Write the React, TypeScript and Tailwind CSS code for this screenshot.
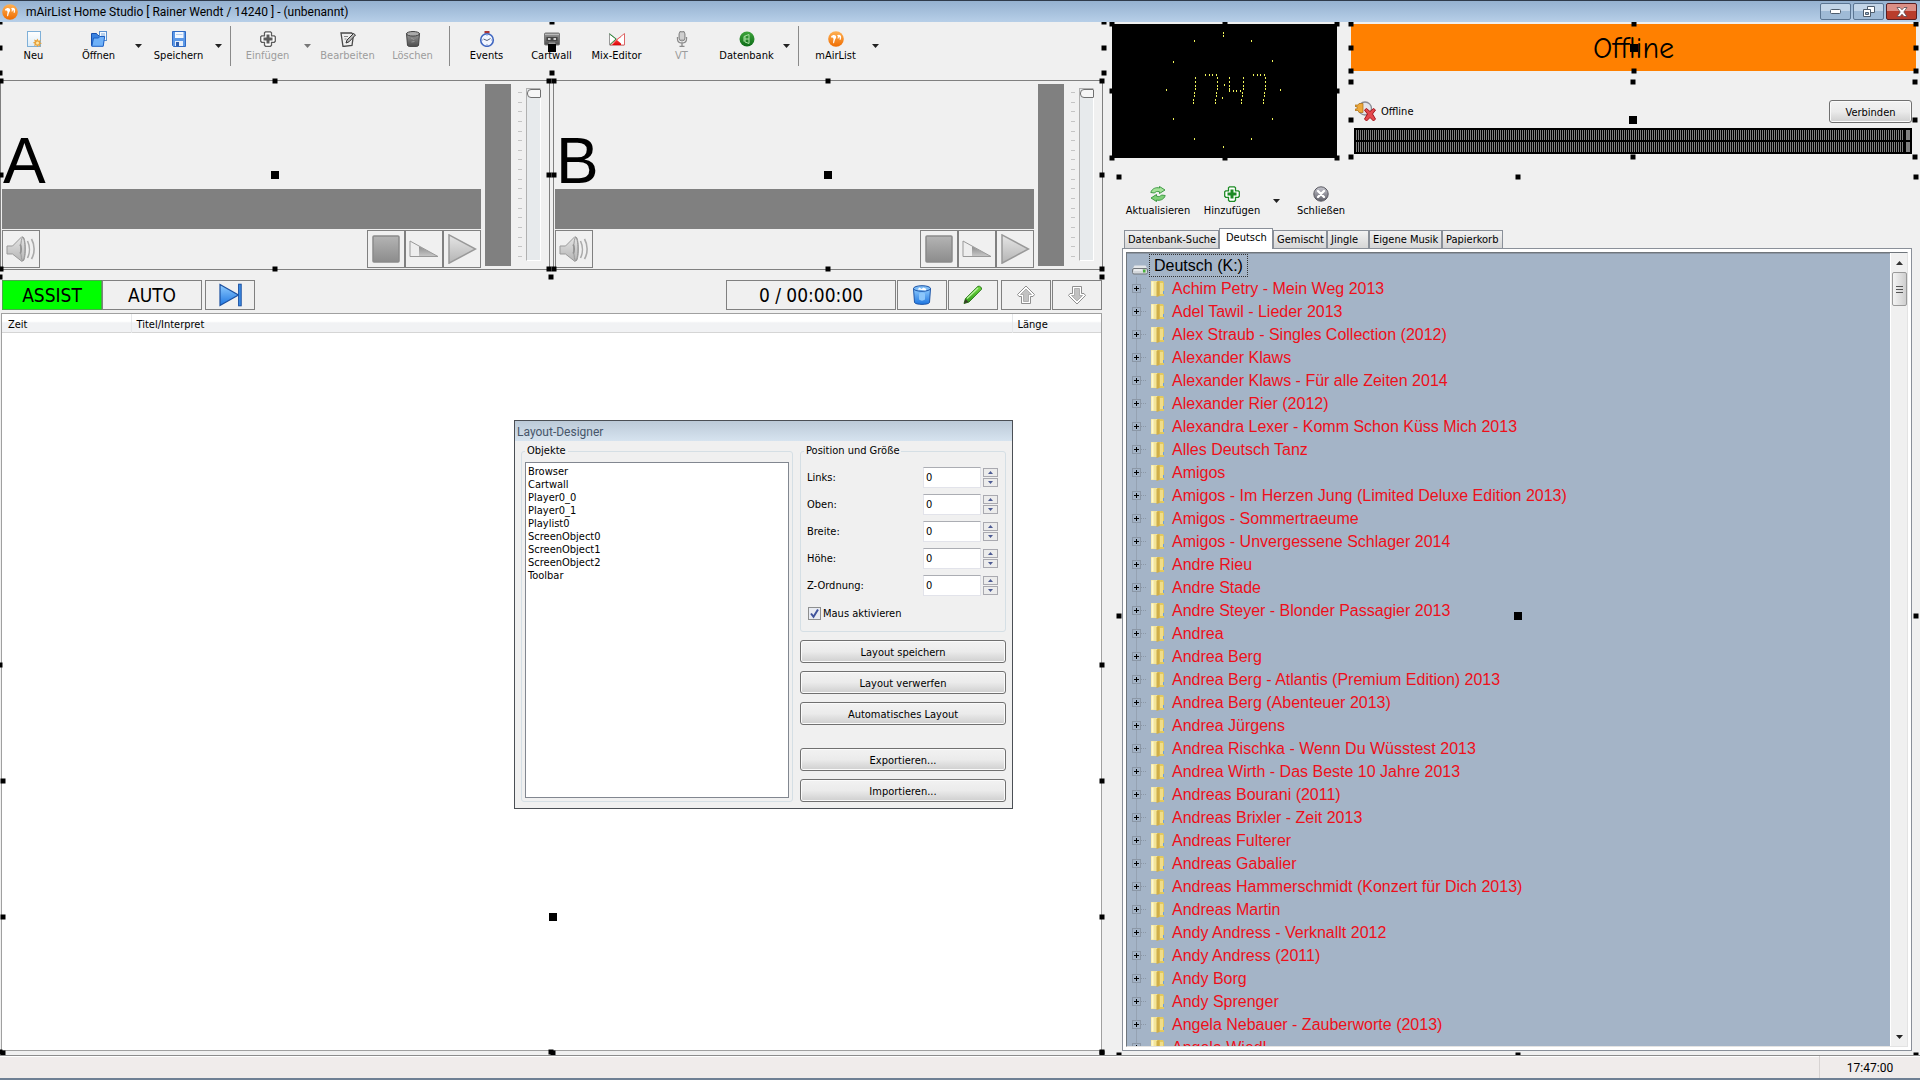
import type { ReactNode } from "react"

const albums = [
  "Achim Petry - Mein Weg 2013",
  "Adel Tawil - Lieder 2013",
  "Alex Straub - Singles Collection (2012)",
  "Alexander Klaws",
  "Alexander Klaws - Für alle Zeiten 2014",
  "Alexander Rier (2012)",
  "Alexandra Lexer - Komm Schon Küss Mich 2013",
  "Alles Deutsch Tanz",
  "Amigos",
  "Amigos - Im Herzen Jung (Limited Deluxe Edition 2013)",
  "Amigos - Sommertraeume",
  "Amigos - Unvergessene Schlager 2014",
  "Andre Rieu",
  "Andre Stade",
  "Andre Steyer - Blonder Passagier 2013",
  "Andrea",
  "Andrea Berg",
  "Andrea Berg - Atlantis (Premium Edition) 2013",
  "Andrea Berg (Abenteuer 2013)",
  "Andrea Jürgens",
  "Andrea Rischka - Wenn Du Wüsstest 2013",
  "Andrea Wirth - Das Beste 10 Jahre 2013",
  "Andreas Bourani (2011)",
  "Andreas Brixler - Zeit 2013",
  "Andreas Fulterer",
  "Andreas Gabalier",
  "Andreas Hammerschmidt (Konzert für Dich 2013)",
  "Andreas Martin",
  "Andy Andress - Verknallt 2012",
  "Andy Andress (2011)",
  "Andy Borg",
  "Andy Sprenger",
  "Angela Nebauer - Zauberworte (2013)",
  "Angela Wiedl",
]

const objects = [
  "Browser",
  "Cartwall",
  "Player0_0",
  "Player0_1",
  "Playlist0",
  "ScreenObject0",
  "ScreenObject1",
  "ScreenObject2",
  "Toolbar",
]

/* ---------- design mode handles ---------- */

function Handles({ center = true }: { center?: boolean }) {
  return (
    <div className="pointer-events-none absolute inset-0 z-10" aria-hidden="true">
      <i className="absolute top-0 left-0 size-[5px] -translate-1/2 bg-black" />
      <i className="absolute top-0 left-1/2 size-[5px] -translate-1/2 bg-black" />
      <i className="absolute top-0 left-full size-[5px] -translate-1/2 bg-black" />
      <i className="absolute top-1/2 left-0 size-[5px] -translate-1/2 bg-black" />
      <i className="absolute top-1/2 left-full size-[5px] -translate-1/2 bg-black" />
      <i className="absolute top-full left-0 size-[5px] -translate-1/2 bg-black" />
      <i className="absolute top-full left-1/2 size-[5px] -translate-1/2 bg-black" />
      <i className="absolute top-full left-full size-[5px] -translate-1/2 bg-black" />
      {center && <i className="absolute top-1/2 left-1/2 size-2 -translate-1/2 bg-black" />}
    </div>
  )
}

/* ---------- icons ---------- */

function Svg({ children, size = 16 }: { children: ReactNode; size?: number }) {
  return (
    <svg width={size} height={size} viewBox={`0 0 ${size} ${size}`} aria-hidden="true">
      {children}
    </svg>
  )
}

function LogoIcon() {
  return (
    <Svg>
      <circle cx="8" cy="8" r="7.8" fill="url(#orange)" />
      <path d="M3 5.500c1.500-1.800 3.500-2 4.800-.8.8 1.300.2 2.600-.6 3.500-.6 1-.7 2.300-1 3.600l-1 .8c-.3-1.600.2-3 .4-4.500l-.8-1.500-1.300.2zM9 4.500c1.200-1 2.800-1 3.800.2.6 1.500.4 3-.4 4.200l-.8-.2.2-2.500-1 .2-.5 1.300-.9-.5.6-1.500z" fill="#fff" />
    </Svg>
  )
}

function NewIcon() {
  return (
    <Svg>
      <rect x="1.500" y=".5" width="13" height="15" fill="url(#paper)" stroke="#7fb0d8" />
      <path d="M11.500 7.500l1 2.200 2.400-.7-1 2.200 2.100 1-2.200 1 .9 2.200-2.300-.8-1 1.500-1.200-1.800-2.200.6.800-2.200-2-1 2-1-.7-2.200 2.300.7z" fill="#e8a33d" />
      <circle cx="11.500" cy="12" r="1.500" fill="#ffe9a8" />
    </Svg>
  )
}

function OpenIcon() {
  return (
    <Svg>
      <path d="M.5 2.500h5l1.500 2h5v10H.5z" fill="#3b83e0" stroke="#174fae" />
      <rect x="8.500" y=".5" width="7" height="9" fill="#f4faff" stroke="#5b91cf" />
      <path d="M10 3h4M10 5h4" stroke="#7ea9d8" />
      <path d="M.8 15.300L2.500 7h5l1.200-1.500h5l-1.500 9.800z" fill="#6fb1f8" stroke="#1c5fc4" />
    </Svg>
  )
}

function SaveIcon() {
  return (
    <Svg>
      <path d="M1.500.5h13v15h-12l-1-1z" fill="#5c98e6" stroke="#2f6ac4" />
      <rect x="4" y="1" width="8.500" height="6" fill="#f3f8ff" />
      <path d="M5 3.500h6.500" stroke="#b9d0ee" />
      <rect x="4" y="10" width="8" height="5" fill="#e6effb" />
      <rect x="5" y="11" width="3" height="4" fill="#2f5fae" />
    </Svg>
  )
}

function PlusIcon({ color }: { color: string }) {
  return (
    <Svg>
      <path d="M5.500.8h5l1 1v3h2.800l1 1v4.500l-1 1h-2.800v3l-1 1h-5l-1-1v-3H1.700l-1-1V5.800l1-1h2.800v-3z" fill="#fff" stroke={color} strokeWidth="1.300" />
      <path d="M6.500 3.500h3v3h3v3h-3v3h-3v-3h-3v-3h3z" fill={color} />
    </Svg>
  )
}

function EditIcon() {
  return (
    <Svg>
      <path d="M1 2h10.500l2 1.500-1.500 11-9 1z" fill="#efefef" stroke="#4a4a4a" strokeWidth="1.300" />
      <path d="M4 5.500h4M4.500 8h2" stroke="#888" />
      <path d="M6 12l1-3 6.500-6.500 2 1.500L9 10.800z" fill="#bbb" stroke="#333" />
    </Svg>
  )
}

function DeleteIcon() {
  return (
    <Svg>
      <path d="M1.500 2.500l1 12 2 1.200h7l2-1.200 1-12z" fill="url(#can)" stroke="#444" />
      <ellipse cx="8" cy="2.800" rx="6.500" ry="2.300" fill="#aaa" stroke="#444" />
      <path d="M6 7l3 1.500 1-1M6.500 11l3-.5" stroke="#999" fill="none" />
    </Svg>
  )
}

function EventsIcon() {
  return (
    <Svg>
      <rect x="5.500" y="0" width="5" height="2.500" fill="#a33" />
      <circle cx="8" cy="9" r="6.300" fill="#f2f6ff" stroke="#3f66c0" strokeWidth="1.600" />
      <path d="M4.500 8L8 9.500l3.500-2" fill="none" stroke="#55607a" />
      <path d="M8 4v1M8 13v1M3 9h1M12 9h1" stroke="#8fa3cf" />
    </Svg>
  )
}

function CartIcon() {
  return (
    <Svg>
      <rect x=".5" y="2" width="15" height="12" rx="1" fill="url(#can)" stroke="#777" />
      <path d="M1 3.500h14" stroke="#bbb" />
      <rect x="2.500" y="6" width="11" height="4" fill="#444" />
      <path d="M4 8h2.500M9.500 8H12" stroke="#fff" strokeWidth="1.500" />
      <path d="M4 14l1-2.500h6l1 2.500" fill="#999" />
    </Svg>
  )
}

function MixIcon() {
  return (
    <Svg>
      <path d="M.5 14V2.500L15 14z" fill="#fff" stroke="#999" />
      <path d="M15.500 14V2.500L1 14z" fill="#fff" stroke="#d66" />
      <path d="M2 14l6-5 4 3.500V6l-4 3zM8 8.500l4-3V14H3z" fill="url(#mix)" />
      <path d="M.5 3l6.500 5L1 13.500" fill="none" stroke="#2a8f3a" />
    </Svg>
  )
}

function MicIcon() {
  return (
    <Svg>
      <rect x="5" y="0" width="6" height="10" rx="3" fill="#b5b5b5" stroke="#8a8a8a" />
      <path d="M6 3h4M6 5h4M6 7h4" stroke="#e8e8e8" />
      <path d="M3.500 6v2c0 3 2 4 4.500 4s4.500-1 4.500-4V6M8 12v3M5.500 15.300h5" fill="none" stroke="#8a8a8a" strokeWidth="1.300" />
    </Svg>
  )
}

function DatabaseIcon() {
  return (
    <Svg>
      <circle cx="8" cy="8" r="7.500" fill="url(#green)" />
      <path d="M6 5l4-1.500v9L6 11zM6 8h4M6 5l-1 .5v5" fill="none" stroke="#a9e0a3" />
    </Svg>
  )
}

function RefreshIcon() {
  return (
    <Svg>
      <path d="M.8 6.500C2 2.500 6 1 9.500 2V.5l5.500 3.500-5.500 3.500V5.800C7 5 5.500 5.500 4.500 7z" fill="#a5e29a" stroke="#3f9a45" />
      <path d="M15.200 9.500C14 13.500 10 15 6.500 14v1.500L1 12l5.500-3.500v1.700c2.500.8 4 .3 5-1.200z" fill="#7fcf78" stroke="#3f9a45" />
    </Svg>
  )
}

function CloseIcon() {
  return (
    <Svg>
      <circle cx="8" cy="8" r="7.200" fill="url(#steel)" stroke="#5a5a62" />
      <path d="M5 5l6 6M11 5l-6 6" stroke="#fff" strokeWidth="2.400" strokeLinecap="round" />
    </Svg>
  )
}

function OfflineIcon() {
  return (
    <svg width="22" height="21" viewBox="0 0 22 21" aria-hidden="true">
      <circle cx="10" cy="7.500" r="6.500" fill="#e4e4ea" stroke="#8a8a92" strokeWidth="1.300" />
      <path d="M0 4h3l1-1.500h4v9H4l-1-2H0v-1.500h2V5.500H0z" fill="#eda83a" stroke="#a96f16" strokeWidth=".7" />
      <path d="M9.500 9l2-1.500 3.500 3 3.500-3 2 1.500-3 4 3 5-2 2-3.500-3.500-3.500 3.500-2-2 3-5z" fill="#e5484d" stroke="#a3141a" />
    </svg>
  )
}

function SpeakerIcon() {
  return (
    <svg width="30" height="28" viewBox="0 0 30 28" aria-hidden="true">
      <path d="M1 11h5.500L16 1.500c2 1 3 6 3 12.500s-1 11.500-3 12.500L6.500 19H1z" fill="url(#silver)" stroke="#999" />
      <path d="M14 9.500c1.500 1.500 1.500 7.500 0 9" fill="none" stroke="#888" strokeWidth="1.600" />
      <ellipse cx="17" cy="14" rx="2.300" ry="12" fill="none" stroke="#9a9a9a" />
      <path d="M21.500 6c2.500 5 2.500 12 0 17M25.500 4c3.500 6 3.500 14 0 20" fill="none" stroke="#aaa" strokeWidth="1.600" />
    </svg>
  )
}

function StopIcon() {
  return (
    <Svg size={28}>
      <rect x="1" y="1" width="26" height="26" rx="1" fill="url(#stop)" stroke="#8a8a8a" strokeWidth="1.500" />
    </Svg>
  )
}

function FadeIcon() {
  return (
    <Svg size={30}>
      <path d="M1 7l9 5.200V22.500H1z" fill="#eee" />
      <path d="M10 12.200L29 22.500H10z" fill="url(#fade)" />
      <path d="M1 7v15.500h28z" fill="none" stroke="#999" />
    </Svg>
  )
}

function PlayIcon() {
  return (
    <Svg size={30}>
      <path d="M2 .8L28.500 15 2 29.200z" fill="url(#silver)" stroke="#999" strokeWidth="1.500" />
    </Svg>
  )
}

function NextIcon() {
  return (
    <svg width="24" height="24" viewBox="0 0 24 24" aria-hidden="true">
      <path d="M2 1.500L20.500 12 2 22.500z" fill="url(#blue)" stroke="#1a4fa0" strokeWidth="1.200" />
      <rect x="20.600" y="1.200" width="2.600" height="21.600" fill="#3f8fe8" stroke="#1a4fa0" />
    </svg>
  )
}

function BinIcon() {
  return (
    <Svg size={20}>
      <path d="M1.500 3.500l1 14c1 2.500 14 2.500 15 0l1-14z" fill="url(#blue)" stroke="#1f56a8" />
      <ellipse cx="10" cy="3.500" rx="8.500" ry="2.800" fill="#7fbcf5" stroke="#1f56a8" />
      <path d="M5.500 4.500l2-2 2 1.500 2-1.500 3 1.500-1 1.500z" fill="#fff" />
      <path d="M7 8.500c2-1.500 4-1.500 6 0v6c-2 1.500-4 1.500-6 0z" fill="#8cc6fa" />
    </Svg>
  )
}

function PencilIcon() {
  return (
    <Svg size={20}>
      <path d="M1 18.500l1.500-5L15 1.300c2-.6 3.800 1.200 3.500 3L6 17z" fill="url(#pencil)" stroke="#2c7a1c" />
      <path d="M1 18.500l1.500-4.500L5.500 17z" fill="#3a3a2a" />
      <path d="M4 13.500L15 3" stroke="#b9f0a0" strokeWidth="1.400" />
    </Svg>
  )
}

function ArrowIcon({ down = false }: { down?: boolean }) {
  return (
    <svg width="20" height="20" viewBox="0 0 20 20" className={down ? "rotate-180" : ""} aria-hidden="true">
      <path d="M10 1l8.500 8.500-1.500 2h-2.500v7h-9v-7H3l-1.500-2z" fill="#fff" stroke="#8f8f8f" />
      <path d="M10 4l5.500 5.500h-3v7h-5v-7h-3z" fill="#c2c2c2" stroke="#a2a2a2" strokeWidth=".8" />
    </svg>
  )
}

function FolderIcon() {
  return (
    <svg width="14" height="17" viewBox="0 0 14 17" aria-hidden="true">
      <rect x="0" y="1" width="7" height="15" fill="#f3e59a" />
      <path d="M6 1h6l1 2v13H6z" fill="#e3c95f" />
      <path d="M5.500 2l3-1v15l-3 1z" fill="#cfae48" />
      <path d="M1.500 1.500v14" stroke="#fdf7cf" strokeWidth="2" />
      <rect x="9" y="3" width="3" height="11" fill="#f0dd8a" />
      <path d="M12.500 11v3" stroke="#6f9fd8" />
    </svg>
  )
}

function DriveIcon() {
  return (
    <svg width="16" height="10" viewBox="0 0 16 10" aria-hidden="true">
      <path d="M2.500.5h11L15.500 4H.5z" fill="#e3e6e9" />
      <rect x=".5" y="3.500" width="15" height="5.500" rx="1.500" fill="#d4d8dc" stroke="#71777d" />
      <path d="M2 5h8" stroke="#fff" />
      <rect x="11" y="4.500" width="2.500" height="3" fill="#4bb03c" />
    </svg>
  )
}

function Caret({ dim = false }: { dim?: boolean }) {
  return (
    <svg width="7" height="4" viewBox="0 0 7 4" aria-hidden="true">
      <path d="M0 0h7L3.500 4z" fill={dim ? "#777" : "#222"} />
    </svg>
  )
}

/* Gradients shared by the icons above */
function Gradients() {
  const stops: [string, string, string][] = [
    ["orange", "#ffb255", "#ef6c00"],
    ["paper", "#ffffff", "#dcecf8"],
    ["can", "#9a9a9a", "#4c4c4c"],
    ["green", "#3fa53c", "#0c6b17"],
    ["steel", "#c8c8d0", "#5f5f68"],
    ["silver", "#e6e6e6", "#b4b4b4"],
    ["stop", "#b4b4b4", "#8c8c8c"],
    ["fade", "#8c8c8c", "#c8c8c8"],
    ["blue", "#8fccff", "#1f76e0"],
    ["pencil", "#6fdc3c", "#2f9a1c"],
    ["mix", "#ff6a6a", "#e00000"],
  ]
  return (
    <svg width="0" height="0" className="absolute" aria-hidden="true">
      <defs>
        {stops.map(([id, from, to]) => (
          <linearGradient key={id} id={id} x1="0" y1="0" x2="0" y2="1">
            <stop offset="0" stopColor={from} />
            <stop offset="1" stopColor={to} />
          </linearGradient>
        ))}
      </defs>
    </svg>
  )
}

/* ---------- title bar ---------- */

function TitleBar() {
  return (
    <header className="flex h-[22px] shrink-0 items-center border-t border-[#2f3a4a] bg-linear-to-b from-[#95b1d0] to-[#b7cfe8] pr-[3px] pl-[2px]">
      <LogoIcon />
      <h1 className="ml-2 flex-1 font-[Roboto,'Noto_Sans',sans-serif] text-[12px] leading-4 text-black">
        mAirList Home Studio [ Rainer Wendt / 14240 ] - (unbenannt)
      </h1>
      <div className="flex gap-[2px]">
        <button aria-label="Minimieren" className="flex h-[17px] w-[31px] items-center justify-center rounded-[2px] border border-[#5b7592] bg-linear-to-b from-[#c3d5e8] from-50% to-[#9fbad6] to-50%">
          <svg width="11" height="5" viewBox="0 0 11 5"><rect x=".5" y=".5" width="10" height="4" rx="1" fill="#fff" stroke="#4f5d6d" /></svg>
        </button>
        <button aria-label="Wiederherstellen" className="flex h-[17px] w-[31px] items-center justify-center rounded-[2px] border border-[#5b7592] bg-linear-to-b from-[#c3d5e8] from-50% to-[#9fbad6] to-50%">
          <svg width="12" height="11" viewBox="0 0 12 11">
            <path d="M4.500.5h7v6h-7z" fill="#fff" stroke="#4f5d6d" />
            <path d="M.5 3.500h7v7h-7z" fill="#fff" stroke="#4f5d6d" />
            <path d="M2.500 6.500h3v2h-3z" fill="#9fbad6" stroke="#4f5d6d" />
          </svg>
        </button>
        <button aria-label="Schließen" className="flex h-[17px] w-[31px] items-center justify-center rounded-[2px] border border-[#5a1f22] bg-linear-to-b from-[#dc8f86] from-50% to-[#b93d2c] to-50%">
          <svg width="12" height="10" viewBox="0 0 12 10">
            <path d="M1 .5h3l2 2.300L8 .5h3L7.800 5 11 9.500H8L6 7.200 4 9.500H1L4.200 5z" fill="#fff" stroke="#5d4a50" strokeWidth=".8" />
          </svg>
        </button>
      </div>
    </header>
  )
}

/* ---------- toolbars ---------- */

function ToolButton({ icon, label, wide = false, disabled = false }: { icon: ReactNode; label: string; wide?: boolean; disabled?: boolean }) {
  return (
    <button
      disabled={disabled}
      className={`flex shrink-0 flex-col items-center gap-px whitespace-nowrap disabled:text-[#9c9c9c] ${wide ? "w-[74px]" : "w-[65px]"}`}
    >
      {icon}
      <span className="leading-4">{label}</span>
    </button>
  )
}

function DropButton({ label, dim = false }: { label: string; dim?: boolean }) {
  return (
    <button aria-label={label} className="flex h-[30px] w-[15px] shrink-0 items-center justify-center">
      <Caret dim={dim} />
    </button>
  )
}

function Separator() {
  return (
    <div className="-mt-[5px] flex w-[9px] shrink-0 justify-center">
      <div className="h-10 w-px bg-[#8a8a8a]" />
    </div>
  )
}

function Toolbar() {
  return (
    <div role="toolbar" className="relative flex h-[51px] shrink-0 items-start pt-[9px] pl-px">
      <ToolButton icon={<NewIcon />} label="Neu" />
      <ToolButton icon={<OpenIcon />} label="Öffnen" />
      <DropButton label="Öffnen Menü" />
      <ToolButton icon={<SaveIcon />} label="Speichern" />
      <DropButton label="Speichern Menü" />
      <Separator />
      <ToolButton icon={<PlusIcon color="#5c5c5c" />} label="Einfügen" disabled />
      <DropButton label="Einfügen Menü" dim />
      <ToolButton icon={<EditIcon />} label="Bearbeiten" disabled />
      <ToolButton icon={<DeleteIcon />} label="Löschen" disabled />
      <Separator />
      <ToolButton icon={<EventsIcon />} label="Events" />
      <ToolButton icon={<CartIcon />} label="Cartwall" />
      <ToolButton icon={<MixIcon />} label="Mix-Editor" />
      <ToolButton icon={<MicIcon />} label="VT" disabled />
      <ToolButton icon={<DatabaseIcon />} label="Datenbank" />
      <DropButton label="Datenbank Menü" />
      <Separator />
      <ToolButton icon={<LogoIcon />} label="mAirList" />
      <DropButton label="mAirList Menü" />
      <Handles />
    </div>
  )
}

/* ---------- players ---------- */

function PlayerButton({ label, children }: { label: string; children: ReactNode }) {
  return (
    <button aria-label={label} className="flex size-[38px] items-center justify-center border border-[#808080]">
      {children}
    </button>
  )
}

function Player({ name }: { name: string }) {
  return (
    <section className="relative flex h-[190px] min-w-0 border border-[#808080] pl-px">
      <div className="flex min-w-0 flex-1 flex-col pb-px">
        <div className="flex flex-1 items-end pl-px">
          <h2 className="font-['Liberation_Sans',Arial,sans-serif] text-[64px] leading-[56px]">{name}</h2>
        </div>
        <div className="h-10 bg-[#808080]" />
        <div className="mt-px flex justify-between">
          <PlayerButton label="Vorhören"><SpeakerIcon /></PlayerButton>
          <div className="flex">
            <PlayerButton label="Stopp"><StopIcon /></PlayerButton>
            <PlayerButton label="Ausblenden"><FadeIcon /></PlayerButton>
            <PlayerButton label="Start"><PlayIcon /></PlayerButton>
          </div>
        </div>
      </div>
      <div className="mt-[3px] mb-[3px] ml-1 w-[26px] bg-[#808080]" />
      <div className="flex gap-1 pt-[7px] pr-2 pb-[8px] pl-[7px]">
        <div className="flex flex-col justify-between py-1">
          {Array.from({ length: 18 }, (_, i) => (
            <div key={i} className="h-px w-1 bg-[#c4c4c4]" />
          ))}
        </div>
        <input
          type="range"
          aria-label={`Lautstärke ${name}`}
          defaultValue={0}
          className="h-full w-[15px] appearance-none border border-[#b0b0b0] border-r-white border-b-white bg-[#e7eaec] [writing-mode:vertical-lr] [&::-webkit-slider-thumb]:h-[9px] [&::-webkit-slider-thumb]:w-[14px] [&::-webkit-slider-thumb]:appearance-none [&::-webkit-slider-thumb]:rounded-l-[4px] [&::-webkit-slider-thumb]:rounded-r-[1px] [&::-webkit-slider-thumb]:border [&::-webkit-slider-thumb]:border-[#707070] [&::-webkit-slider-thumb]:bg-[#f6f6f6]"
        />
      </div>
      <Handles />
    </section>
  )
}

/* ---------- playlist ---------- */

function ListButton({ label, children }: { label: string; children: ReactNode }) {
  return (
    <button aria-label={label} className="flex w-[50px] items-center justify-center border border-[#808080]">
      {children}
    </button>
  )
}

function Playlist() {
  return (
    <section className="relative mt-[7px] mr-[2px] mb-[3px] flex min-h-0 flex-1 flex-col pt-[3px]">
      <div className="ml-[2px] flex h-[30px] shrink-0 justify-between text-[19px]">
        <div className="flex">
          <button className="w-[100px] border border-[#4aa84a] bg-[#00ff00]">ASSIST</button>
          <button className="w-[100px] border border-[#808080]">AUTO</button>
          <div className="ml-[3px] flex">
            <ListButton label="Nächster Titel"><NextIcon /></ListButton>
          </div>
        </div>
        <div className="flex gap-px">
          <output className="flex w-[170px] items-center justify-center border border-[#808080]">0 / 00:00:00</output>
          <ListButton label="Papierkorb leeren"><BinIcon /></ListButton>
          <ListButton label="Bearbeiten"><PencilIcon /></ListButton>
          <div className="ml-[2px] flex gap-px">
            <ListButton label="Nach oben"><ArrowIcon /></ListButton>
            <ListButton label="Nach unten"><ArrowIcon down /></ListButton>
          </div>
        </div>
      </div>
      <div className="mt-[3px] mb-px ml-px flex-1 border border-[#a0a0a0] bg-white">
        <table className="w-full table-fixed border-collapse">
          <thead className="border-b border-[#d5d5d5] bg-linear-to-b from-white from-40% to-[#f1f2f4] to-50%">
            <tr className="text-left">
              <th className="w-[129px] border-r border-[#e6e8ea] pt-1 pl-[6px] font-normal">Zeit</th>
              <th className="border-r border-[#e6e8ea] pt-1 pl-[5px] font-normal">Titel/Interpret</th>
              <th className="w-[89px] pt-1 pl-[5px] font-normal">Länge</th>
            </tr>
          </thead>
          <tbody />
        </table>
      </div>
      <Handles />
    </section>
  )
}

/* ---------- clock and encoder ---------- */

// Each entry is one LED of the studio clock
const hourDots = [
  [111, 8], [111, 11], [139, 16], [160, 36], [168, 65], [160, 94], [139, 114],
  [111, 122], [82, 114], [61, 94], [54, 65], [61, 37], [82, 16],
]
const column = (x: number) => [
  [x, 53], [x, 57], [x, 61], [x, 64], [x - 1, 68], [x - 1, 71], [x - 2, 75], [x - 2, 78],
]
const bar = (x: number, y: number) => [[x, y], [x + 4, y], [x + 7, y], [x + 11, y]]
const digitDots = [
  ...column(83),
  ...bar(93, 50), ...column(105),
  [112, 60], [110, 73],
  ...column(117).slice(0, 4), ...bar(117, 66), ...column(131),
  ...bar(141, 50), ...column(153),
]

function Clock() {
  return (
    <section className="relative h-[134px] w-[225px] shrink-0 bg-black">
      <svg width="225" height="134" viewBox="0 0 225 134" role="img" aria-label="17:47" shapeRendering="crispEdges">
        {[...hourDots, ...digitDots].map(([x, y], i) => (
          <rect key={i} x={x} y={y} width="1" height="2" fill="#eef25a" />
        ))}
      </svg>
      <Handles center={false} />
    </section>
  )
}

function MeterRow() {
  return (
    <div className="flex h-[10px] gap-[3px]">
      <div className="flex-1 bg-[repeating-linear-gradient(90deg,#808080_0px,#808080_1px,#000_1px,#000_2px)]" />
      <div className="w-1 bg-[#808080]" />
    </div>
  )
}

function Encoder() {
  return (
    <section className="relative mt-[11px] mr-px flex h-[75px] flex-col pr-[3px] pl-[3px]">
      <div className="mt-[18px] flex h-[23px] items-center pl-px">
        <OfflineIcon />
        <span className="ml-1 flex-1">Offline</span>
        <WinButton className="h-[23px] w-[83px]">Verbinden</WinButton>
      </div>
      <div className="mt-[5px] flex h-[26px] flex-col gap-[2px] bg-black p-[2px]">
        <MeterRow />
        <MeterRow />
      </div>
      <Handles />
    </section>
  )
}

function WinButton({ children, className = "" }: { children: ReactNode; className?: string }) {
  return (
    <button className={`rounded-[3px] border border-[#707070] bg-linear-to-b from-[#f2f2f2] via-[#ebebeb] via-50% to-[#cfcfcf] pt-[2px] shadow-[inset_0_0_0_1px_#fafafa] ${className}`}>
      {children}
    </button>
  )
}

/* ---------- browser ---------- */

function Tab({ children, width, active = false }: { children: ReactNode; width: string; active?: boolean }) {
  return (
    <button
      role="tab"
      aria-selected={active}
      className={`${width} border border-b-0 border-[#8a9099] text-left whitespace-nowrap ${
        active
          ? "z-[1] -mb-px h-[21px] bg-white pb-[2px] pl-[6px]"
          : "h-[18px] bg-linear-to-b from-[#f2f2f2] to-[#d6d6d6] pt-px pl-[3px]"
      }`}
    >
      {children}
    </button>
  )
}

function Browser() {
  return (
    <section className="relative mt-[19px] mr-1 ml-[15px] flex min-h-0 flex-1 flex-col pr-1 pb-1 pl-[3px]">
      <div role="toolbar" className="flex h-11 items-start pt-[9px]">
        <div className="-ml-px flex">
          <ToolButton icon={<RefreshIcon />} label="Aktualisieren" wide />
          <ToolButton icon={<PlusIcon color="#1c8a24" />} label="Hinzufügen" wide />
          <DropButton label="Hinzufügen Menü" />
          <ToolButton icon={<CloseIcon />} label="Schließen" wide />
        </div>
      </div>
      <div role="tablist" className="mt-[7px] flex items-end pl-[2px]">
        <Tab width="w-[95px]">Datenbank-Suche</Tab>
        <Tab width="w-[54px]" active>Deutsch</Tab>
        <Tab width="w-[54px]">Gemischt</Tab>
        <Tab width="w-[42px]">Jingle</Tab>
        <Tab width="w-[73px]">Eigene Musik</Tab>
        <Tab width="w-[61px]">Papierkorb</Tab>
      </div>
      <div className="flex min-h-0 flex-1 border border-[#8a9099] bg-white p-[3px]">
        <div className="flex min-h-0 flex-1 border border-t-[#70767c] border-r-[#e3e3e3] border-b-[#e3e3e3] border-l-[#70767c] bg-[#a4b4c7]">
          <ul role="tree" className="min-h-0 flex-1 overflow-hidden border-t border-[#8c97a5] pl-1 font-['Liberation_Sans',Arial,sans-serif] text-[16px]">
            <li role="treeitem" className="flex h-[23px] items-center">
              <span className="ml-px mt-2"><DriveIcon /></span>
              <span className="ml-px border border-dotted border-[#333] px-1 leading-[21px] text-black">Deutsch (K:)</span>
            </li>
            {albums.map((album) => (
              <li key={album} role="treeitem" className="flex h-[23px] items-center whitespace-nowrap text-[#ee0f1a]">
                <div className="flex h-full w-5 items-center bg-[linear-gradient(90deg,transparent_5px,#95a2b2_5px,#95a2b2_6px,transparent_6px)]">
                  <button aria-label={`${album} öffnen`} className="ml-px flex size-[9px] items-center justify-center border border-[#8b97a6] bg-[#a4b4c7]">
                    <svg width="5" height="5" viewBox="0 0 5 5"><path d="M0 2.500h5M2.500 0v5" stroke="#000" /></svg>
                  </button>
                  <span className="w-[5px] border-t border-dotted border-[#8b97a6]" />
                </div>
                <FolderIcon />
                <span className="ml-[7px]">{album}</span>
              </li>
            ))}
          </ul>
          <div className="flex w-[17px] flex-col items-center border-l border-white bg-[#f0f0f0]">
            <button aria-label="Nach oben blättern" className="flex h-[19px] w-full items-center justify-center">
              <svg width="7" height="4" viewBox="0 0 7 4"><path d="M0 4h7L3.500 0z" fill="#333" /></svg>
            </button>
            <div className="flex h-[34px] w-[15px] flex-col items-center justify-center gap-[2px] rounded-[2px] border border-[#9a9a9a] bg-linear-to-r from-[#f4f4f4] to-[#cfcfcf]">
              <i className="h-px w-[7px] bg-[#555]" />
              <i className="h-px w-[7px] bg-[#555]" />
              <i className="h-px w-[7px] bg-[#555]" />
            </div>
            <button aria-label="Nach unten blättern" className="mt-auto flex h-[19px] w-full items-center justify-center">
              <Caret />
            </button>
          </div>
        </div>
      </div>
      <Handles />
    </section>
  )
}

/* ---------- layout designer ---------- */

function SpinRow({ id, label }: { id: string; label: string }) {
  return (
    <div className="flex h-[21px] items-center">
      <label htmlFor={id} className="flex-1">{label}</label>
      <input id={id} defaultValue="0" className="h-[21px] w-[58px] border border-[#e2e3ea] border-t-[#abadb3] bg-white pl-[2px]" />
      <div className="ml-[2px] flex w-[15px] flex-col gap-px">
        <button aria-label={`${label} erhöhen`} className="flex h-[9px] items-center justify-center border border-[#a9a9b0] bg-[#ececec]">
          <svg width="5" height="3" viewBox="0 0 5 3"><path d="M0 3h5L2.500 0z" fill="#4d5b94" /></svg>
        </button>
        <button aria-label={`${label} verringern`} className="flex h-[9px] items-center justify-center border border-[#a9a9b0] bg-[#ececec]">
          <svg width="5" height="3" viewBox="0 0 5 3"><path d="M0 0h5L2.500 3z" fill="#4d5b94" /></svg>
        </button>
      </div>
    </div>
  )
}

function LayoutDesigner() {
  return (
    <div role="dialog" aria-labelledby="designer-title" className="absolute top-[420px] left-[514px] z-20 w-[499px] border border-[#4b4f55] bg-[#f0f0f0] pb-[6px]">
      <h2 id="designer-title" className="flex h-5 items-center bg-linear-to-b from-[#bccad8] to-[#d6e3ef] pt-px pl-[2px] font-[Roboto,'Noto_Sans',sans-serif] text-[12px] text-[#47566a]">
        Layout-Designer
      </h2>
      <div className="flex gap-[7px] px-[6px] pt-[3px]">
        <fieldset className="flex w-[272px] flex-col rounded-[3px] border border-[#d5dfe5] px-[3px] pb-[3px]">
          <legend className="px-[2px] leading-[14px]">Objekte</legend>
          <select size={9} aria-label="Objekte" className="mt-1 flex-1 appearance-none overflow-hidden border border-[#828790] bg-white py-[2px]">
            {objects.map((name) => (
              <option key={name} className="h-[13px] min-h-0 p-0 pl-[2px] leading-[13px]">{name}</option>
            ))}
          </select>
        </fieldset>
        <div className="flex flex-1 flex-col">
          <fieldset className="rounded-[3px] border border-[#d5dfe5] pr-[7px] pb-[11px] pl-[6px]">
            <legend className="-ml-[3px] px-[2px] leading-[14px]">Position und Größe</legend>
            <div className="mt-[9px] flex flex-col gap-[6px]">
              <SpinRow id="links" label="Links:" />
              <SpinRow id="oben" label="Oben:" />
              <SpinRow id="breite" label="Breite:" />
              <SpinRow id="hoehe" label="Höhe:" />
              <SpinRow id="z" label="Z-Ordnung:" />
            </div>
            <label className="mt-[11px] flex h-[13px] items-center gap-[2px]">
              <span className="relative ml-px">
                <input type="checkbox" defaultChecked className="peer block size-[13px] appearance-none border border-[#8e8f8f] bg-[#e8ebf2]" />
                <svg width="13" height="13" viewBox="0 0 13 13" className="pointer-events-none absolute inset-0 hidden peer-checked:block" aria-hidden="true">
                  <path d="M3 6.500L5.500 9.800 10 2.500" fill="none" stroke="#3f539c" strokeWidth="2" />
                </svg>
              </span>
              Maus aktivieren
            </label>
          </fieldset>
          <div className="mt-2 flex flex-col gap-2">
            <WinButton className="h-[23px]">Layout speichern</WinButton>
            <WinButton className="h-[23px]">Layout verwerfen</WinButton>
            <WinButton className="h-[23px]">Automatisches Layout</WinButton>
            <WinButton className="mt-[15px] h-[23px]">Exportieren...</WinButton>
            <WinButton className="h-[23px]">Importieren...</WinButton>
          </div>
        </div>
      </div>
    </div>
  )
}

/* ---------- status bar ---------- */

function StatusBar() {
  return (
    <footer className="flex h-[25px] shrink-0 border-t border-b-2 border-t-[#8c8c8c] border-b-[#6f8094] bg-[#f0eceb] shadow-[inset_0_1px_#fff]">
      <div className="flex-1" />
      <div className="flex w-[101px] items-center justify-center border-l border-[#d7d3d2] pt-[2px] font-[Roboto,'Noto_Sans',sans-serif] text-[12px]">17:47:00</div>
    </footer>
  )
}

export default function App() {
  return (
    <div className="relative flex h-screen flex-col overflow-hidden bg-[#f0f0f0] font-['DejaVu_Sans_Condensed','DejaVu_Sans',sans-serif] text-[11px] leading-[14px] text-black">
      <Gradients />
      <TitleBar />
      <main className="grid min-h-0 flex-1 grid-cols-[1104fr_816fr] overflow-hidden">
        <div className="relative flex min-h-0 flex-col">
          <Toolbar />
          <div className="mt-[7px] mr-px grid grid-cols-2 gap-[3px]">
            <Player name="A" />
            <Player name="B" />
          </div>
          <Playlist />
          {/* cartwall sits on top of the lower third of the playlist */}
          <div className="absolute right-[2px] bottom-[2px] left-[3px] h-[272px]">
            <Handles />
          </div>
        </div>
        <div className="flex min-h-0 flex-col">
          <div className="flex gap-[14px] pt-[2px] pr-1 pl-2">
            <Clock />
            <div className="flex-1">
              <div className="relative flex h-[47px] items-center justify-center bg-[#ff8000] pt-[2px] font-['Comic_Sans_MS','Comic_Neue','Noto_Sans',sans-serif] text-[30px] leading-8 [font-variant-ligatures:none]">
                Offline
                <Handles />
              </div>
              <Encoder />
            </div>
          </div>
          <Browser />
        </div>
      </main>
      <StatusBar />
      <LayoutDesigner />
    </div>
  )
}
